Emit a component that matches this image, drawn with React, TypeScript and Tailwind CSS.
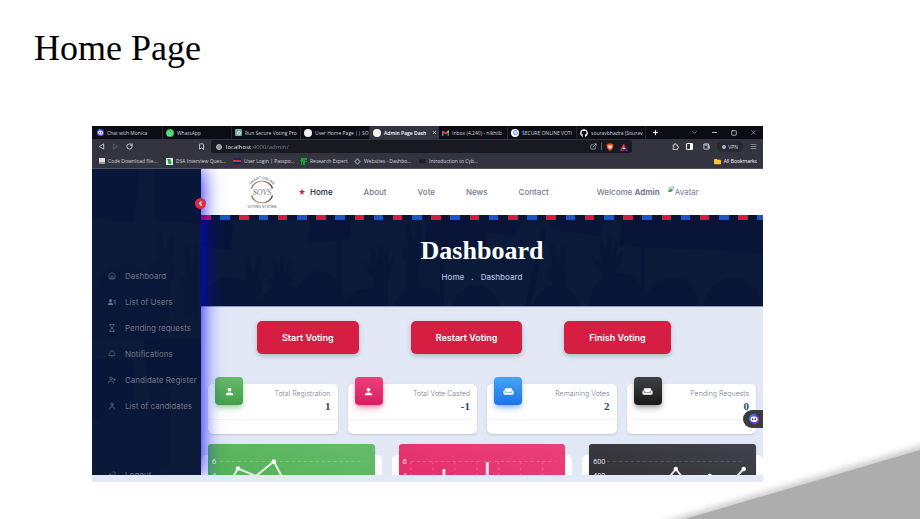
import type { ReactNode } from "react";
import {
  Bell, Bookmark, ChevronDown, ChevronLeft, ExternalLink, Hourglass, House, LogOut, Menu, Minus, Plus,
  RotateCw, Square, User, UserPlus, Wallet, X,
} from "lucide-react";
import { FaFolder, FaGithub, FaGoogle, FaWhatsapp } from "react-icons/fa";
import { MdWeekend, MdPerson } from "react-icons/md";

const chrome = "font-['Open_Sans','Noto_Sans',sans-serif]";

function MonicaFace({ size }: { size: number }) {
  return (
    <svg width={size} height={size} viewBox="0 0 20 20" aria-hidden="true" className="shrink-0">
      <defs>
        <linearGradient id="monica" x1="0" y1="0" x2="1" y2="1">
          <stop offset="0" stopColor="#2fb8f0" />
          <stop offset="0.5" stopColor="#4a35e8" />
          <stop offset="1" stopColor="#c34cf0" />
        </linearGradient>
      </defs>
      <circle cx="10" cy="10" r="10" fill="url(#monica)" />
      <rect x="3" y="5" width="14" height="11" rx="5.5" fill="#fff" />
      <ellipse cx="7.5" cy="10.5" rx="1.4" ry="2" fill="#1c1630" />
      <ellipse cx="12.5" cy="10.5" rx="1.4" ry="2" fill="#1c1630" />
    </svg>
  );
}

function Gmail() {
  return (
    <svg width="7" height="6" viewBox="0 0 24 18" aria-hidden="true" className="shrink-0">
      <path d="M0 2v16h5.5V8z" fill="#4285f4" />
      <path d="M24 2v16h-5.500V8z" fill="#34a853" />
      <path d="M0 2q1-3 4-1l8 6 8-6q3-2 4 1v3l-12 9L0 5z" fill="#ea4335" />
      <path d="M18.500 2 24 0v5l-5.500 4z" fill="#fbbc04" />
    </svg>
  );
}

const disc = <span className="size-2 shrink-0 rounded-full bg-[#f2f2ee]" />;

const tabs: { label: string; icon: ReactNode; active?: boolean }[] = [
  { label: "Chat with Monica", icon: <MonicaFace size={7} /> },
  { label: "WhatsApp", icon: <span className="flex size-2 shrink-0 items-center justify-center rounded-full bg-[#25c253]"><FaWhatsapp size={6} color="#fff" /></span> },
  { label: "Run Secure Voting Pro", icon: <span className="flex size-[7px] shrink-0 items-center justify-center rounded-[1px] bg-[#74aa9c]"><span className="size-1 rounded-full border border-[#d6e9e3]" /></span> },
  { label: "User Home Page || SO", icon: disc },
  { label: "Admin Page Dash", icon: disc, active: true },
  { label: "Inbox (4,240) - nikhilb", icon: <Gmail /> },
  { label: "SECURE ONLINE VOTI", icon: <span className="flex size-2 shrink-0 items-center justify-center rounded-full bg-white"><FaGoogle size={5} color="#4285f4" /></span> },
  { label: "souravbhadra (Sourav", icon: <FaGithub size={8} color="#fff" className="shrink-0" /> },
];

const bookmarks: { label: string; icon: ReactNode; width: string }[] = [
  { label: "Code Download file...", width: "w-[67px]", icon: <span className="size-[6px] shrink-0 border-b-2 border-[#9a9a9a] bg-[#dcdcdc]" /> },
  { label: "DSA Interview Ques...", width: "w-[67px]", icon: <span className="flex size-[7px] shrink-0 items-center justify-center bg-[#dff5e3]"><span className="h-[5px] w-[3px] skew-x-12 bg-[#1ea446]" /></span> },
  { label: "User Login | Passpo...", width: "w-[67px]", icon: <span className="flex h-[6px] w-2 shrink-0 items-center bg-[#16246e]"><span className="h-[2px] w-full bg-[#c23a3c]" /></span> },
  { label: "Research Expert", width: "w-[54px]", icon: <svg width="7" height="7" viewBox="0 0 7 7" className="shrink-0" aria-hidden="true"><path d="M1 0h6v2H5v1h2v1H5v3H3V4H2v3H1V3H0V2h1z" fill="#16a32c" /></svg> },
  { label: "Websites - Dashbo...", width: "w-[65px]", icon: <svg width="7" height="7" viewBox="0 0 8 8" className="shrink-0" aria-hidden="true"><path d="M4 0 8 4 4 8 0 4z M4 2 2 4l2 2 2-2z" fill="#8a8c95" fillRule="evenodd" /></svg> },
  { label: "Introduction to Cyb...", width: "w-[70px]", icon: <span className="h-1 w-[7px] shrink-0 bg-[#1e202a]" /> },
];

function BrowserChrome() {
  return (
    <div className={`${chrome} text-[5px] leading-[8px] text-[#d3d4da]`}>
      <div className="flex h-[13px] items-stretch bg-[#0c0c16] pl-[2px]">
        {tabs.map((t) => (
          <button
            key={t.label}
            type="button"
            className={
              t.active
                ? "flex w-[69px] items-center gap-[3px] bg-[#33343f] pr-[2px] pl-[3px] font-semibold text-white"
                : "flex w-[69px] items-center gap-[3px] border-r border-[#24252f] pl-[3px]"
            }
          >
            {t.icon}
            <span className="flex-1 text-left whitespace-nowrap">{t.label}</span>
            {t.active && <X size={5} strokeWidth={3} className="shrink-0" />}
          </button>
        ))}
        <button type="button" aria-label="New tab" className="ml-[6px] text-white"><Plus size={7} strokeWidth={4} /></button>
        <div className="ml-auto flex items-center gap-[13px] pr-[6px]">
          <button type="button" aria-label="Search tabs"><ChevronDown size={7} /></button>
          <button type="button" aria-label="Minimize"><Minus size={7} strokeWidth={3} /></button>
          <button type="button" aria-label="Restore"><Square size={6} strokeWidth={3} /></button>
          <button type="button" aria-label="Close"><X size={7} /></button>
        </div>
      </div>

      <div className="flex h-[15px] items-center bg-[#33343f] pr-[6px] pl-[6px]">
        <div className="flex items-center gap-[7px]">
          <button type="button" aria-label="Back"><svg width="7" height="7" viewBox="0 0 8 8"><path d="M6.500 1v6L1.500 4z" fill="none" stroke="#c9cad1" /></svg></button>
          <button type="button" aria-label="Forward"><svg width="7" height="7" viewBox="0 0 8 8"><path d="M1.500 1v6l5-3z" fill="none" stroke="#5d5f6b" /></svg></button>
          <button type="button" aria-label="Reload"><RotateCw size={7} strokeWidth={3} /></button>
        </div>
        <button type="button" aria-label="Bookmark this page" className="ml-[65px]"><Bookmark size={7} strokeWidth={3} /></button>
        <div className="ml-[6px] flex h-[13px] flex-1 items-center gap-1 rounded-[2px] bg-[#181a22] pr-1 pl-[5px]">
          <span className="size-[6px] rounded-full border border-[#b9bac1] bg-[#8f9098]" />
          <input
            readOnly
            aria-label="Address"
            value="localhost:4000/admin/"
            className="min-w-0 flex-1 bg-[linear-gradient(90deg,#fff_25px,#7d7f89_25px)] bg-clip-text text-[6px] leading-[8px] text-transparent outline-none"
          />
          <ExternalLink size={7} strokeWidth={2} />
          <span className="h-[7px] w-px bg-[#5d5f6b]" />
          <svg width="8" height="8" viewBox="0 0 16 16" role="img" aria-label="Shields"><path d="M4 1h8l3 3-1.500 7L8 16l-5.500-5L1 4z" fill="#f4511e" /><path d="m4 5 2 .5L8 5l2 .5L12 5l-1 4-3 3-3-3z" fill="#fff" /></svg>
          <svg width="8" height="8" viewBox="0 0 16 16" className="ml-[2px]" role="img" aria-label="Rewards"><path d="M8 1 0 15h8V9z" fill="#ff4724" /><path d="M8 1v8l4 6h4z" fill="#9e1f63" /><path d="M0 15 8 9.500 16 15z" fill="#5a2fa8" /><path d="m8 8 2.500 4h-5z" fill="#fff" /></svg>
        </div>
        <div className="ml-10 flex items-center gap-[7px]">
          <button type="button" aria-label="Extensions"><svg width="7" height="7" viewBox="0 0 14 14"><path d="M2 4h3q-1-3 1.500-3T8 4h3v3q2.500-.5 2.500 1.500T11 10v3H2v-3q2.500 0 2.500-1.500T2 7z" fill="none" stroke="currentColor" strokeWidth="1.700" /></svg></button>
          <button type="button" aria-label="Side panel" className="text-white"><svg width="7" height="7" viewBox="0 0 14 14"><rect x="1" y="1" width="12" height="12" rx="1" fill="none" stroke="currentColor" strokeWidth="2" /><path d="M8 1h5v12H8z" fill="currentColor" /></svg></button>
          <button type="button" aria-label="Wallet" className="ml-[3px]"><Wallet size={7} strokeWidth={3} /></button>
          <button type="button" className="flex h-[11px] items-center gap-[2px] rounded-full bg-[#272833] px-[5px]"><span className="size-1 rounded-full border border-[#c9cad1] bg-[#8f9098]" />VPN</button>
          <button type="button" aria-label="Menu" className="text-[#8f9098]"><Menu size={7} strokeWidth={3} /></button>
        </div>
      </div>

      <nav aria-label="Bookmarks" className="flex h-[15px] items-center border-b border-[#50525d] bg-[#33343f] pr-[6px] pl-[7px]">
        {bookmarks.map((b) => (
          <a key={b.label} href="#" className={`${b.width} flex shrink-0 items-center gap-[3px] whitespace-nowrap`}>{b.icon}{b.label}</a>
        ))}
        <a href="#" className="ml-auto flex items-center gap-[3px] whitespace-nowrap text-white"><FaFolder size={7} color="#fbc62f" />All Bookmarks</a>
      </nav>
    </div>
  );
}

/* Faint crowd of raised hands and placards behind the dark panels. */
function Crowd({ className }: { className: string }) {
  return (
    <svg viewBox="0 0 560 92" preserveAspectRatio="xMinYMin slice" aria-hidden="true" className={className}>
      <defs>
        <g id="open-hand">
          <path d="M8 70V38Q0 32-3 24q2-2 5 1l5 5L5 10q2-3 4 0l3 14 1-18q2-3 4 0l0 18 4-15q3-2 3 1l-3 17 5-9q3-1 3 2l-7 18v32z" />
        </g>
        <g id="victory">
          <path d="M8 70V44Q1 38 4 30l5-2L5 6q2-4 5 0l4 19 4-20q4-2 4 2l-3 22q5 2 3 10l-3 7v24z" />
        </g>
      </defs>
      <rect width="560" height="92" fill="#0b1a39" />
      <g fill="#081539">
        <path d="M0 0h32l-2 35-30-4zM110 0h40l-2 24-42 5zM225 0h62l-3 36-60-6zM245 0h76l-8 22-70-10zM344 0h61l-8 22-48-8zM420 0h141v38l-78-4-66-3z" />
        <path d="M135 22h4v70h-4zM238 25h4v67h-4zM340 12l5 1-17 79h-5zM438 30h4v62h-4z" />
      </g>
      <g fill="#091638">
        <use href="#victory" x="38" y="36" /><use href="#open-hand" x="66" y="36" />
        <use href="#open-hand" x="164" y="24" /><use href="#victory" x="198" y="4" />
        <use href="#victory" x="342" y="24" /><use href="#open-hand" x="392" y="18" />
        <path d="M0 92q5-30 28-30t28 30zM56 92q8-22 28-22t26 22zM92 92q4-36 26-36t26 36zM140 92q8-18 24-18t24 18zM192 92q6-22 26-22t26 22zM250 92q8-22 24-22t24 22zM330 92q8-22 24-22t24 22zM385 92q8-36 32-34t28 34zM440 92q8-30 30-30t26 30zM500 92q8-30 30-30t30 30z" />
      </g>
    </svg>
  );
}

const menu = [
  { label: "Dashboard", icon: <House size={8} /> },
  { label: "List of Users", icon: <svg width="8" height="8" viewBox="0 0 16 16" fill="currentColor" aria-hidden="true"><circle cx="5" cy="5" r="3" /><path d="M0 14q0-5 5-5t5 5zM11 4h5v1.500h-5zM11 7.500h5V9h-5zM12 11h4v1.500h-4z" /></svg> },
  { label: "Pending requests", icon: <Hourglass size={8} /> },
  { label: "Notifications", icon: <Bell size={8} /> },
  { label: "Candidate Register", icon: <UserPlus size={8} /> },
  { label: "List of candidates", icon: <User size={8} /> },
];

function Sidebar() {
  return (
    <aside className="relative z-20 w-[109px] shrink-0 bg-[#081638] shadow-[0_0_20px_#0000ff]">
      <svg viewBox="0 0 109 306" preserveAspectRatio="xMinYMin slice" aria-hidden="true" className="absolute inset-0 h-full w-full">
        <rect width="109" height="306" fill="#0b1a39" />
        <path d="M0 0h47l-5 54-42-6zM62 0h47v54l-47-3zM0 190h43l-3 62H0zM52 170h57v42l-54 8z" fill="#081639" />
        <g fill="#091739">
          <path d="M64 150v-40q-9-8-5-18l6-2-1-24q3-4 6 0l3 22 5-22q4-3 4 2l-3 26q6 3 3 11l-5 10v35zM92 150v-30l-8-14q2-4 6 1l4 5-2-34q3-4 5 0l3 28 2-32q4-3 5 2v74zM0 130q8-34 36-34t34 34v40H0zM64 300v-50q-9-8-5-18l2-24q4-3 5 0l4 16 5-16q4 0 4 4l-3 26q5 6 1 14v48zM0 270q8-34 36-34t34 34v36H0z" />
        </g>
      </svg>
      <button type="button" aria-label="Collapse menu" className="absolute top-[29px] -right-[5px] flex size-[11px] items-center justify-center rounded-full bg-[#dd2c40] text-white"><ChevronLeft size={7} strokeWidth={4} /></button>
      <nav aria-label="Admin" className="relative flex flex-col pt-[94px] pl-4 text-[#6f7480]">
        {menu.map((m) => (
          <a key={m.label} href="#" className="flex h-[26px] items-center gap-[9px] whitespace-nowrap">{m.icon}{m.label}</a>
        ))}
        <a href="#" className="mt-[43px] flex h-[26px] items-center gap-[9px]"><LogOut size={8} className="rotate-180" />Logout</a>
      </nav>
    </aside>
  );
}

function Logo() {
  return (
    <svg width="30" height="34" viewBox="0 0 60 68" className="shrink-0" role="img" aria-label="Smart Online Voting System">
      <defs>
        <linearGradient id="ring"><stop offset="0" stopColor="#8b7767" /><stop offset="0.5" stopColor="#d6b795" /><stop offset="1" stopColor="#4b4440" /></linearGradient>
        <path id="arc" d="M4 34a26 26 0 0 1 52 0" />
      </defs>
      <path d="M9 27a22 21 0 0 1 42 0M9 41a22 21 0 0 0 42 0" fill="none" stroke="url(#ring)" strokeWidth="3" />
      <text fontSize="7" textAnchor="middle" fontFamily="Liberation Sans, sans-serif" fill="#4a4a4f"><textPath href="#arc" startOffset="50%">SMART ONLINE</textPath></text>
      <text x="30" y="40" textAnchor="middle" fontSize="16" fontStyle="italic" fontFamily="Liberation Serif, serif" fill="#77736f">SOVS</text>
      <text x="30" y="66" textAnchor="middle" fontSize="7" fontFamily="Liberation Sans, sans-serif" fill="#5a5a5f">VOTING SYSTEM</text>
    </svg>
  );
}

function SiteHeader() {
  return (
    <header className="flex h-[46px] items-center bg-white pl-[46px] text-[#767b91]">
      <Logo />
      <nav aria-label="Site" className="ml-[22px] flex items-center gap-[31px] font-medium">
        <a href="#" className="flex items-center gap-[5px] text-[#152142]">
          <svg width="6" height="6" viewBox="0 0 12 12" aria-hidden="true"><path d="m6 0 1.500 4.200H12L8.400 7l1.400 4.600L6 8.900l-3.800 2.700L3.600 7 0 4.200h4.500z" fill="#dc1c46" /><path d="M6 0 4.500 4.200H0l2 1.500h8l2-1.500H7.500z" fill="#6a3a9a" opacity=".5" /></svg>
          Home
        </a>
        <a href="#">About</a>
        <a href="#">Vote</a>
        <a href="#">News</a>
        <a href="#">Contact</a>
      </nav>
      <p className="ml-12 font-medium whitespace-nowrap">Welcome <b>Admin</b></p>
      <span className="ml-2 flex items-center whitespace-nowrap">
        <svg width="7" height="8" viewBox="0 0 14 16" className="-mt-1" aria-hidden="true"><path d="M0 12V3q0-2 2-2h7l5 4-8 7z" fill="#c5d8f5" /><path d="m0 12 5-7 5 3-4 4z" fill="#48a43c" /><path d="m9 1 4 0-2 4z" fill="#7fa3cf" /></svg>
        Avatar
      </span>
    </header>
  );
}

function Bunting() {
  const colours = ["bg-[#d21c42]", "bg-[#081533]", "bg-[#1d55c8]", "bg-[#081533]"];
  return (
    <div aria-hidden="true" className="absolute top-0 -right-1 left-0 flex h-[5px]">
      {Array.from({ length: 59 }, (_, i) => (
        <span key={i} className={`${colours[i % 4]} flex-1`} />
      ))}
    </div>
  );
}

const stats = [
  { label: "Total Registration", value: "1", tone: "from-[#66bb6a] to-[#43a047] shadow-[#43a047]/40", icon: <MdPerson size={11} /> },
  { label: "Total Vote Casted", value: "-1", tone: "from-[#ec407a] to-[#d81b60] shadow-[#d81b60]/40", icon: <MdPerson size={11} /> },
  { label: "Remaining Votes", value: "2", tone: "from-[#49a3f1] to-[#1a73e8] shadow-[#1a73e8]/40", icon: <MdWeekend size={11} /> },
  { label: "Pending Requests", value: "0", tone: "from-[#42424a] to-[#191919] shadow-black/30", icon: <MdWeekend size={11} /> },
];

const axis = "font-['Open_Sans',sans-serif] text-[7px]";

const charts = [
  {
    tone: "from-[#66bb6a] to-[#4caf50]",
    ticks: ["6", "4"],
    art: (
      <>
        <path d="M12 17.500h145" stroke="#fff" strokeOpacity=".2" strokeDasharray="3 3" />
        <path d="M22 38 30 24.500 48 32 66 17.500 80 44" fill="none" stroke="#fff" strokeOpacity=".85" strokeWidth="2" />
        <circle cx="30" cy="24.500" r="2.200" fill="#fff" /><circle cx="66" cy="17.500" r="2.200" fill="#fff" />
      </>
    ),
  },
  {
    tone: "from-[#ec407a] to-[#e02868]",
    ticks: ["6", "4"],
    art: (
      <>
        <path d="M12 17.500h145M12 17.500v20M34 17.500v20M56 17.500v20M78 17.500v20M100 17.500v20M122 17.500v20M144 17.500v20" stroke="#fff" strokeOpacity=".2" strokeDasharray="3 3" fill="none" />
        <path d="M43.500 25h3v16h-3zM87 18h3v22h-3z" fill="#fff" fillOpacity=".85" />
      </>
    ),
  },
  {
    tone: "from-[#42424a] to-[#2c2c30]",
    ticks: ["600", "400"],
    art: (
      <>
        <path d="M18 17.500h138" stroke="#fff" strokeOpacity=".15" strokeDasharray="3 3" />
        <path d="M70 46 87 25l16 20 18-14 17 12L155 25" fill="none" stroke="#fff" strokeOpacity=".85" strokeWidth="2" />
        <circle cx="87" cy="25" r="2.200" fill="#fff" /><circle cx="121" cy="32" r="2.200" fill="#fff" /><circle cx="155" cy="25" r="2.200" fill="#fff" />
      </>
    ),
  },
];

function Dashboard() {
  return (
    <main className="min-w-0 flex-1 bg-[#e3e8f6]">
      <SiteHeader />
      <section className="relative flex h-[92px] flex-col items-center overflow-hidden border-b border-[#8f9cb8] bg-[#081533] pt-5">
        <Crowd className="absolute inset-0 h-full w-full" />
        <Bunting />
        <h2 className="relative font-['Liberation_Serif',serif] text-[26px] leading-8 font-bold text-white">Dashboard</h2>
        <p className="relative mt-1 flex gap-[7px] font-medium text-[#b0bce0]"><a href="#">Home</a><span>.</span><a href="#">Dashboard</a></p>
      </section>

      <div className="grid grid-cols-3 justify-items-start pt-[14px] pr-[45px] pl-[56px] text-[9px] font-semibold">
        {["Start Voting", "Restart Voting", "Finish Voting"].map((b) => (
          <button key={b} type="button" className="h-[33px] rounded-[5px] bg-[#d61e43] px-[25px] whitespace-nowrap text-white shadow-[0_2px_5px_#3f7a7066]">{b}</button>
        ))}
      </div>

      <div className="grid grid-cols-4 gap-[10px] px-[7px] pt-[30px]">
        {stats.map((s) => (
          <article key={s.label} className="relative h-[50px] rounded-[5px] bg-white shadow-[0_1px_2px_#8890a866]">
            <div className={`${s.tone} absolute -top-[7px] left-[7px] flex size-7 items-center justify-center rounded-[4px] bg-linear-to-b text-white shadow-md`}>{s.icon}</div>
            <div className="h-9 border-b border-[#f3f4f7] pt-1 pr-[7px] text-right">
              <p className="text-[7px] leading-3 font-light text-[#7b809a]">{s.label}</p>
              <p className="font-['Liberation_Serif',serif] text-[11px] leading-3 font-bold text-[#344767]">{s.value}</p>
            </div>
          </article>
        ))}
      </div>

      <div className="grid grid-cols-3 gap-[10px] pt-[21px]">
        {charts.map((c, i) => (
          <article key={i} className="h-20 rounded-[5px] bg-white px-[7px]">
            <div className={`${c.tone} relative -mt-[11px] h-16 overflow-hidden rounded-[3px] bg-linear-to-bl shadow-sm`}>
              <div className={`${axis} flex flex-col gap-[3px] pt-3 pl-1 leading-[11px] text-[#f4f4f4]`}>{c.ticks.map((t) => <span key={t}>{t}</span>)}</div>
              <svg viewBox="0 0 167 64" preserveAspectRatio="none" aria-hidden="true" className="absolute inset-0 h-full w-full">{c.art}</svg>
            </div>
          </article>
        ))}
      </div>
    </main>
  );
}

export default function App() {
  return (
    <div className="relative min-h-screen overflow-hidden bg-white font-['Inter',sans-serif] text-[8px] leading-3">
      <svg width="280" height="89" viewBox="0 0 280 89" aria-hidden="true" className="absolute right-0 bottom-0">
        <defs><filter id="soft" x="-10%" y="-30%" width="120%" height="160%"><feGaussianBlur stdDeviation="3" /></filter></defs>
        <path d="M20 93 290 13v90H20z" fill="#a8a8a8" opacity=".6" filter="url(#soft)" />
        <path d="M45 89 280 20v69z" fill="#adadad" />
      </svg>
      <h1 className="pt-7 pl-[34px] font-['Liberation_Serif',serif] text-4xl leading-10 text-black">Home Page</h1>
      <div className="relative mt-[58px] mr-[157px] mb-[37px] ml-[92px] bg-[#e3e9f6] pb-[7px]">
        <BrowserChrome />
        <div className="relative flex h-[306px] overflow-hidden">
          <Sidebar />
          <Dashboard />
          <button type="button" aria-label="Open Monica" className="absolute top-[241px] right-0 z-30 flex h-[18px] w-5 items-center rounded-l-full bg-[#3b3b3f] pl-[6px]"><MonicaFace size={10} /></button>
        </div>
      </div>
    </div>
  );
}
